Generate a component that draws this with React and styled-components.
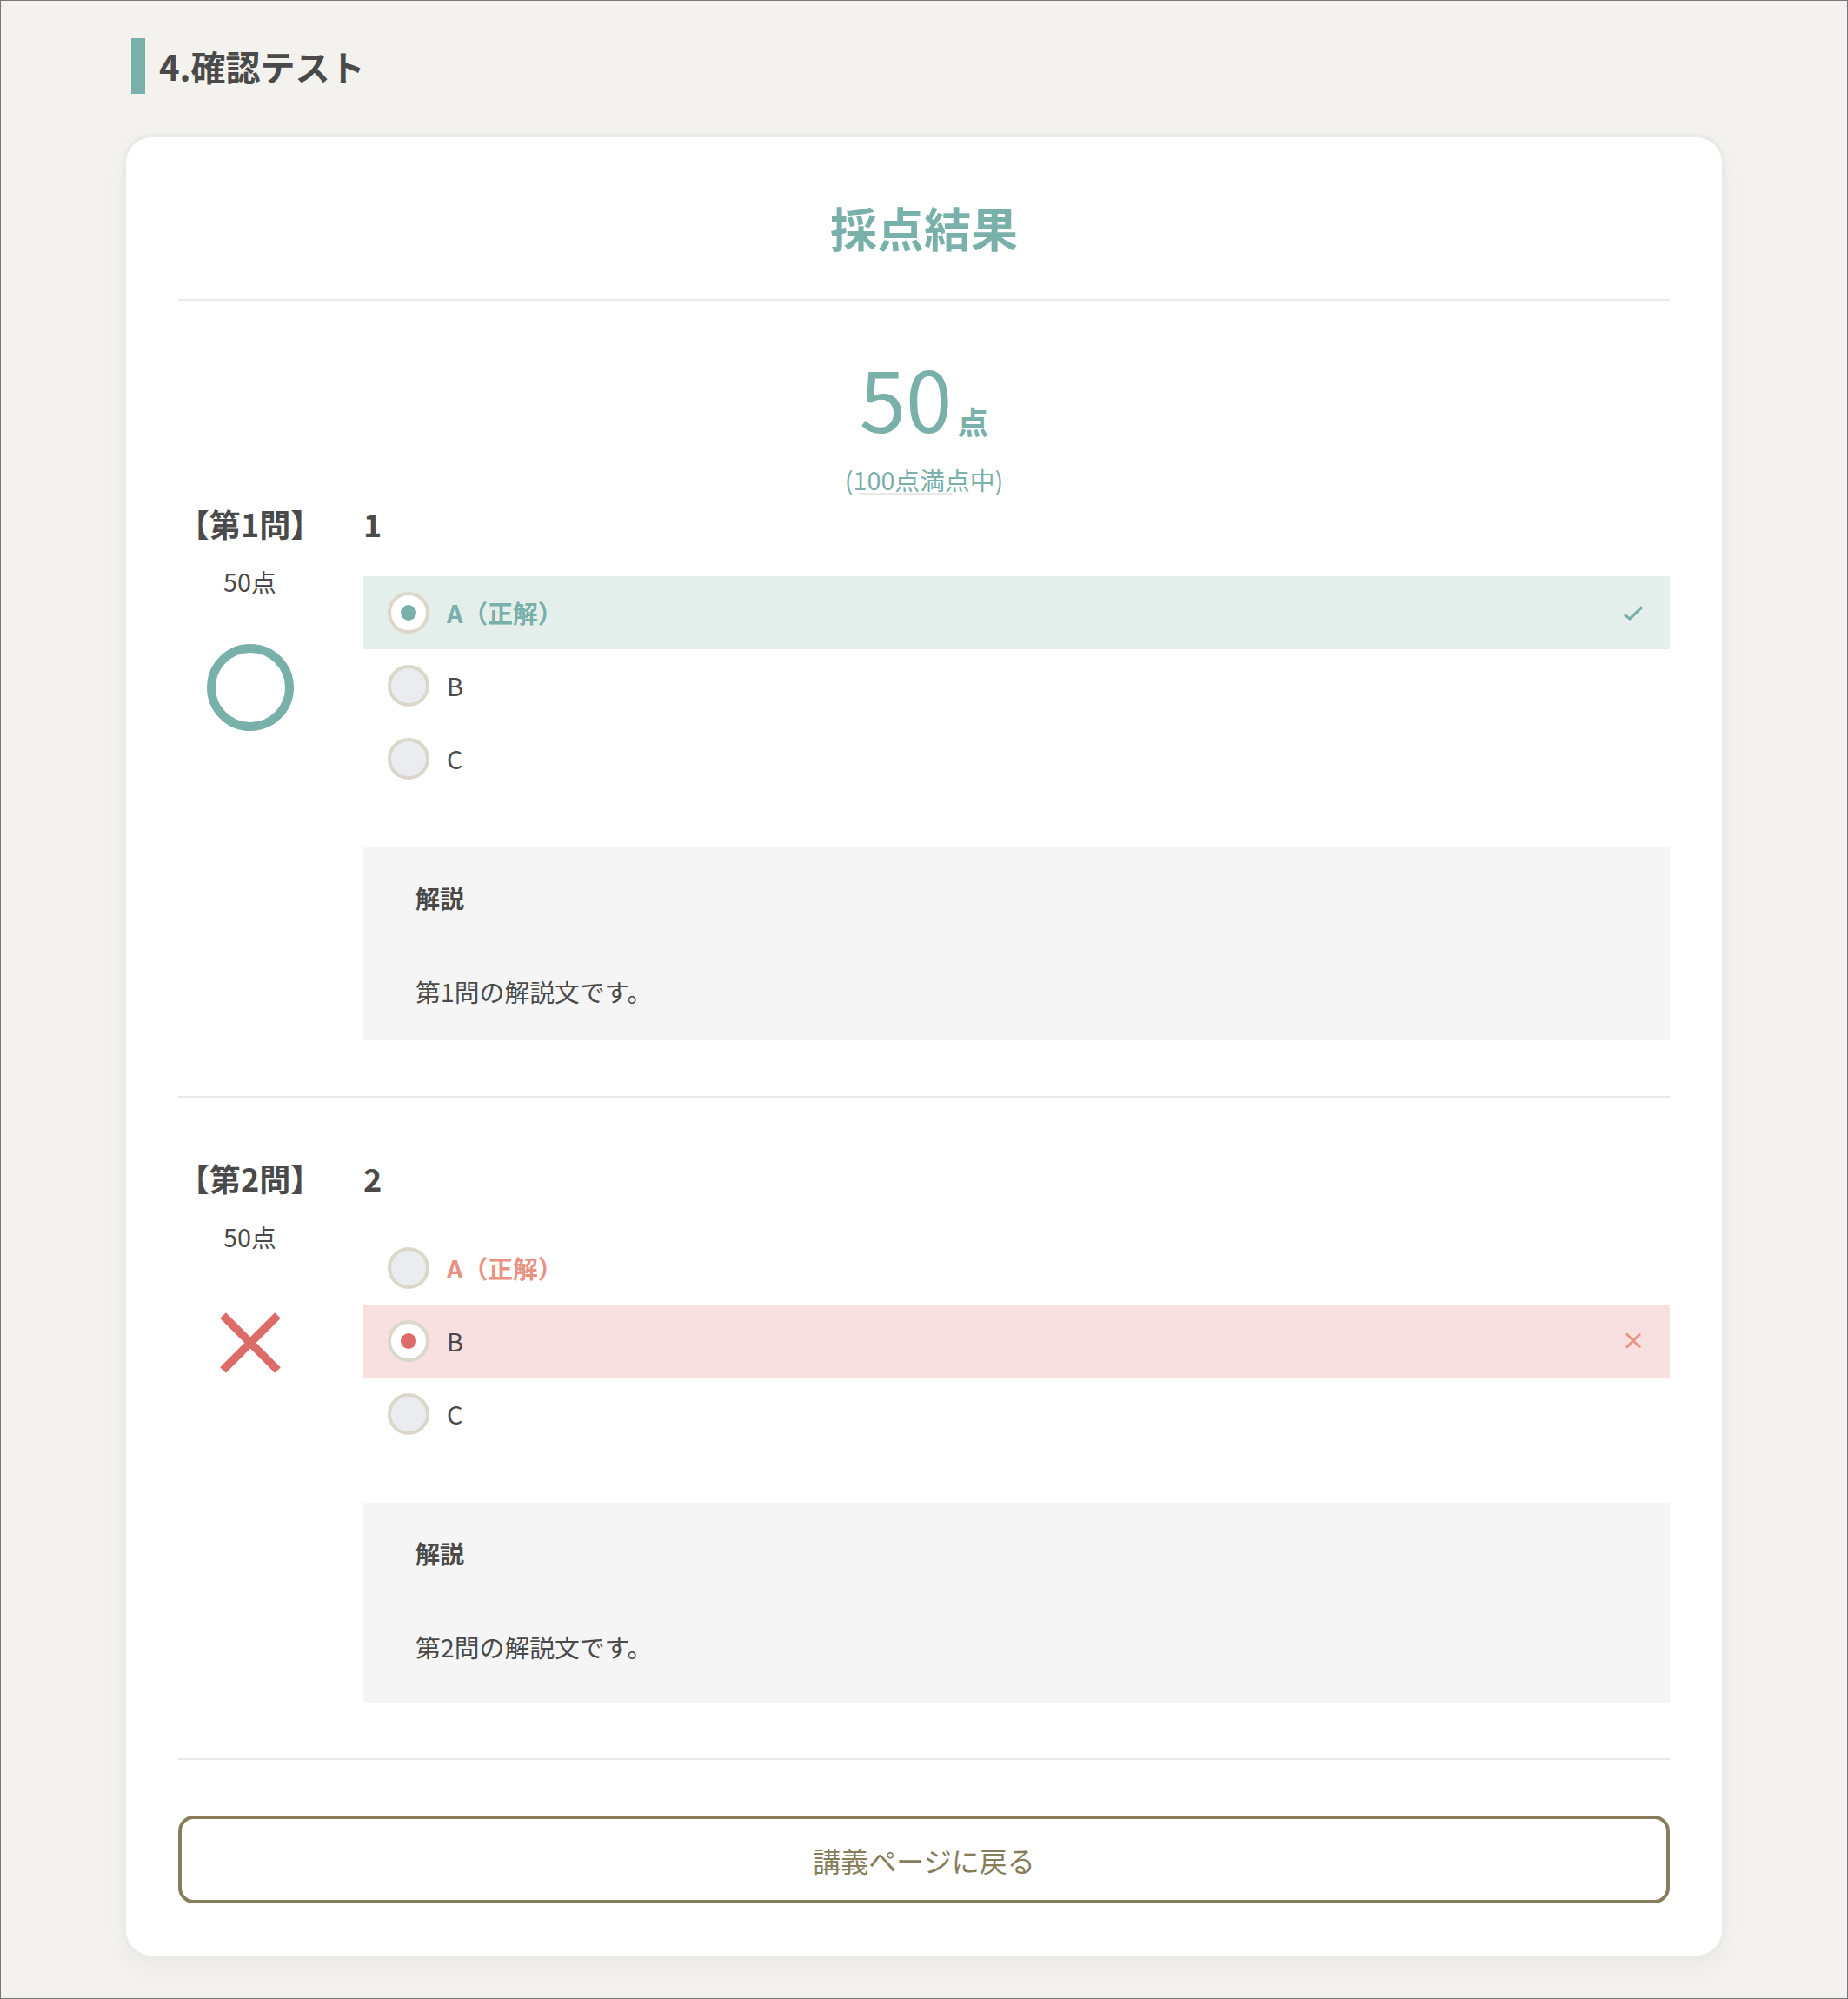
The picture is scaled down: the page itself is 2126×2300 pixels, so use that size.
import React from 'react';
import styled, { createGlobalStyle } from 'styled-components';

const TEAL = '#7ab0aa';
const RED = '#dc6c68';
const SALMON = '#e89282';
const INK = '#4a4a4a';
const RULE = '#e9e9e9';
const OLIVE = '#877d5b';

const Global = createGlobalStyle`
  * { box-sizing: border-box; }
  html, body { margin: 0; padding: 0; background: #f3f2ee; }
  body { font-family: "Noto Sans CJK JP", "Noto Sans", sans-serif; color: ${INK}; }
`;

const Page = styled.div`
  width: 2126px;
  height: 2300px;
  border: 1px solid #77777a;
  padding: 43px 141px 0;
  background: #f3f2ee;
`;

const Heading = styled.h2`
  margin: 0 0 46px 9px;
  height: 64px;
  padding-left: 16px;
  border-left: 16px solid ${TEAL};
  font-size: 40px;
  font-weight: 700;
  line-height: 64px;
  color: ${INK};
`;

const Card = styled.main`
  width: 1842px;
  padding: 60px 60px 60px;
  background: #fff;
  border-style: solid;
  border-color: #eaeae6;
  border-width: 4px 3px;
  border-radius: 33px;
  box-shadow: 0 10px 30px rgba(0, 0, 0, 0.04);
`;

const Title = styled.h1`
  margin: 0;
  padding-bottom: 38px;
  border-bottom: 2px solid ${RULE};
  font-size: 54px;
  line-height: 88px;
  font-weight: 700;
  text-align: center;
  color: ${TEAL};
`;

const Score = styled.section`
  height: 223px;
  padding-top: 56px;
  text-align: center;
  color: ${TEAL};
`;

const ScoreLine = styled.div`
  height: 110px;
  line-height: 110px;
  white-space: nowrap;
`;

const ScoreValue = styled.span`
  font-size: 96px;
  font-weight: 400;
`;

const ScoreUnit = styled.span`
  margin-left: 6px;
  font-size: 36px;
  font-weight: 700;
  vertical-align: -2px;
`;

const ScoreNote = styled.div`
  position: relative;
  display: inline-block;
  margin-top: 19px;
  font-size: 28.8px;
  line-height: 42px;
  &::after {
    content: '';
    position: absolute;
    left: 16px;
    bottom: 4px;
    width: 107px;
    height: 2px;
    background: ${RULE};
  }
`;

const Question = styled.article`
  display: grid;
  grid-template-columns: 165px 1fr;
  column-gap: 48px;
  padding: ${(p) => (p.$first ? '0' : '59px')} 0 64px;
  border-bottom: 2px solid ${RULE};
`;

const Side = styled.div`
  display: flex;
  flex-direction: column;
  align-items: center;
`;

const QuestionLabel = styled.div`
  padding-bottom: ${(p) => (p.$first ? '0' : '1px')};
  font-size: 36px;
  line-height: 66px;
  font-weight: 700;
  white-space: nowrap;
  color: ${INK};
`;

const Points = styled.div`
  margin-top: 13px;
  font-size: 28.8px;
  line-height: 42px;
`;

const Mark = styled.svg`
  display: block;
  width: 100px;
  height: 100px;
  margin-top: 51px;
`;

const QuestionText = styled.div`
  padding-bottom: ${(p) => (p.$first ? '0' : '1px')};
  font-size: 36px;
  line-height: 66px;
  font-weight: 700;
`;

const Choices = styled.ul`
  list-style: none;
  margin: 28px 0 60px;
  padding: 0;
`;

const Choice = styled.li`
  display: flex;
  align-items: center;
  height: 84px;
  padding: 0 30px 0 28px;
  background: ${(p) => p.$bg || 'transparent'};
`;

const Radio = styled.span`
  display: flex;
  align-items: center;
  justify-content: center;
  flex: none;
  width: 48px;
  height: 48px;
  border: 4px solid #dcd7cb;
  border-radius: 50%;
  background: ${(p) => (p.$dot ? '#fff' : '#ebecf0')};
  &::before {
    content: '';
    display: ${(p) => (p.$dot ? 'block' : 'none')};
    width: 18px;
    height: 18px;
    border-radius: 50%;
    background: ${(p) => p.$dot};
  }
`;

const ChoiceText = styled.span`
  flex: 1;
  margin-left: 20px;
  font-size: 28.8px;
  line-height: 42px;
  font-weight: ${(p) => (p.$color ? 700 : 400)};
  color: ${(p) => p.$color || INK};
`;

const ResultIcon = styled.svg`
  display: block;
  flex: none;
  width: 24px;
  height: 24px;
`;

const Explain = styled.aside`
  padding: 37px 60px ${(p) => (p.$tall ? '43px' : '35px')};
  background: #f5f5f5;
`;

const ExplainTitle = styled.h3`
  margin: 0 0 66px;
  font-size: 28px;
  line-height: 42px;
  font-weight: 700;
`;

const ExplainBody = styled.p`
  margin: 0;
  font-size: 28.8px;
  line-height: 42px;
`;

const BackButton = styled.button`
  display: block;
  width: 100%;
  height: 101px;
  margin-top: 64px;
  padding: 0;
  border: 4px solid ${OLIVE};
  border-radius: 18px;
  background: #fff;
  font-family: inherit;
  font-size: 32px;
  color: ${OLIVE};
`;

const CircleMark = () => (
  <Mark viewBox="0 0 100 100">
    <circle cx="50" cy="50" r="45" fill="none" stroke={TEAL} strokeWidth="10" />
  </Mark>
);

const CrossMark = () => (
  <Mark viewBox="0 0 100 100">
    <path d="M18.5 18.5 81.5 81.5M81.5 18.5 18.5 81.5" fill="none" stroke={RED} strokeWidth="9.5" />
  </Mark>
);

const CheckIcon = () => (
  <ResultIcon viewBox="0 0 24 24">
    <path d="M2 14.5 8 19 22 5.5" fill="none" stroke={TEAL} strokeWidth="3.2" />
  </ResultIcon>
);

const CrossIcon = () => (
  <ResultIcon viewBox="0 0 24 24">
    <path d="M4 3.5 20 19.5M20 3.5 4 19.5" fill="none" stroke={SALMON} strokeWidth="2.8" />
  </ResultIcon>
);

const questions = [
  {
    n: 1,
    text: '1',
    correct: true,
    choices: [
      { label: 'A（正解）', color: TEAL, bg: '#e4efec', dot: TEAL, icon: <CheckIcon /> },
      { label: 'B' },
      { label: 'C' },
    ],
  },
  {
    n: 2,
    text: '2',
    correct: false,
    tall: true,
    choices: [
      { label: 'A（正解）', color: SALMON },
      { label: 'B', bg: '#f8e0e0', dot: RED, icon: <CrossIcon /> },
      { label: 'C' },
    ],
  },
];

export default function App() {
  return (
    <Page>
      <Global />
      <Heading>4.確認テスト</Heading>
      <Card>
        <Title>採点結果</Title>
        <Score>
          <ScoreLine>
            <ScoreValue>50</ScoreValue>
            <ScoreUnit>点</ScoreUnit>
          </ScoreLine>
          <ScoreNote>(100点満点中)</ScoreNote>
        </Score>
        {questions.map((q, i) => (
          <Question key={q.n} $first={i === 0}>
            <Side>
              <QuestionLabel $first={i === 0}>【第{q.n}問】</QuestionLabel>
              <Points>50点</Points>
              {q.correct ? <CircleMark /> : <CrossMark />}
            </Side>
            <div>
              <QuestionText $first={i === 0}>{q.text}</QuestionText>
              <Choices>
                {q.choices.map((c) => (
                  <Choice key={c.label} $bg={c.bg}>
                    <Radio $dot={c.dot} />
                    <ChoiceText $color={c.color}>{c.label}</ChoiceText>
                    {c.icon}
                  </Choice>
                ))}
              </Choices>
              <Explain $tall={q.tall}>
                <ExplainTitle>解説</ExplainTitle>
                <ExplainBody>第{q.n}問の解説文です。</ExplainBody>
              </Explain>
            </div>
          </Question>
        ))}
        <BackButton>講義ページに戻る</BackButton>
      </Card>
    </Page>
  );
}
